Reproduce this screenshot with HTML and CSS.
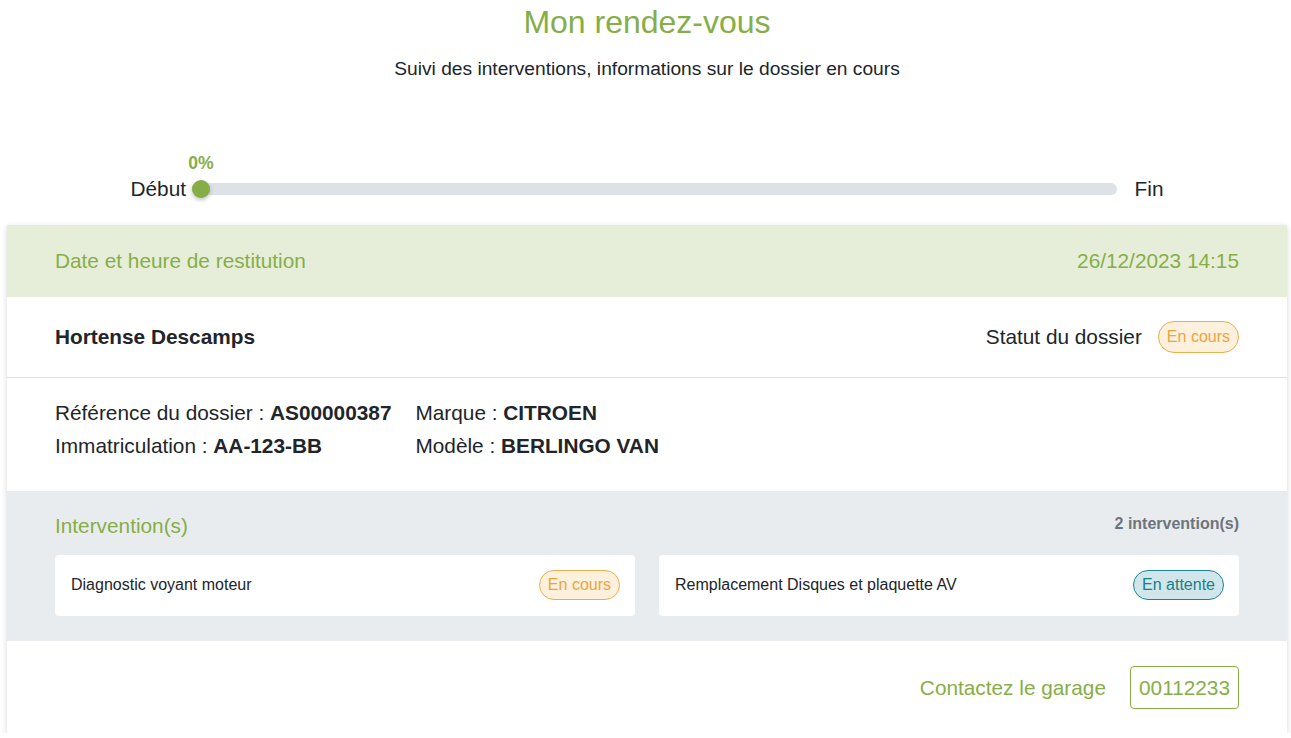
FILE: index.html
```html
<!DOCTYPE html>
<html lang="fr">
<head>
<meta charset="utf-8">
<title>Mon rendez-vous</title>
<link rel="stylesheet" href="styles.css">
</head>
<body>
<div class="page">
  <header class="intro">
    <h1 class="title">Mon rendez-vous</h1>
    <p class="subtitle">Suivi des interventions, informations sur le dossier en cours</p>
  </header>

  <div class="progress">
    <span class="progress-label">Début</span>
    <div class="track">
      <div class="dot"><span class="pct">0%</span></div>
    </div>
    <span class="progress-label end">Fin</span>
  </div>

  <section class="card">
    <div class="restitution">
      <span>Date et heure de restitution</span>
      <span>26/12/2023 14:15</span>
    </div>
    <div class="client">
      <span class="name">Hortense Descamps</span>
      <div class="status">
        <span>Statut du dossier</span>
        <span class="badge badge-warn">En cours</span>
      </div>
    </div>
    <div class="details">
      <div class="col">
        <div>Référence du dossier : <b>AS00000387</b></div>
        <div>Immatriculation : <b>AA-123-BB</b></div>
      </div>
      <div class="col">
        <div>Marque : <b>CITROEN</b></div>
        <div>Modèle : <b>BERLINGO VAN</b></div>
      </div>
    </div>
    <div class="interventions">
      <div class="int-head">
        <span class="int-title">Intervention(s)</span>
        <span class="int-count">2 intervention(s)</span>
      </div>
      <div class="int-grid">
        <div class="int-card">
          <span>Diagnostic voyant moteur</span>
          <span class="badge badge-warn">En cours</span>
        </div>
        <div class="int-card">
          <span>Remplacement Disques et plaquette AV</span>
          <span class="badge badge-info">En attente</span>
        </div>
      </div>
    </div>
    <div class="contact">
      <span class="contact-label">Contactez le garage</span>
      <span class="phone">00112233</span>
    </div>
  </section>
</div>
</body>
</html>
```

FILE: styles.css
```css
* { box-sizing: border-box; }
html, body { margin: 0; padding: 0; }
body {
  font-family: "Liberation Sans", Arial, sans-serif;
  color: #212529;
  background: #fff;
}
.page { padding: 0 4px 0 7px; }

.intro { text-align: center; }
.title {
  margin: 0;
  padding-top: 3px;
  font-size: 32px;
  font-weight: 400;
  line-height: 38px;
  color: #86ae47;
}
.subtitle {
  margin: 16px 0 0;
  font-size: 19.2px;
  line-height: 24px;
}

.progress {
  width: 1033px;
  margin: 96px auto 0;
  display: flex;
  align-items: center;
}
.progress-label { font-size: 20.8px; line-height: 24px; }
.progress-label.end { margin-left: 18px; }
.track {
  flex: 1;
  height: 12px;
  margin-left: 6px;
  border-radius: 6px;
  background: #dee2e6;
  position: relative;
}
.dot {
  position: absolute;
  left: 0;
  top: -3px;
  width: 18px;
  height: 18px;
  border-radius: 50%;
  background: #86ae47;
  box-shadow: 0 2px 4px rgba(0,0,0,0.25);
}
.pct {
  position: absolute;
  left: 50%;
  bottom: 25px;
  transform: translateX(-50%);
  font-size: 17.6px;
  font-weight: 700;
  color: #86ae47;
  line-height: 20px;
}

.card {
  margin-top: 24px;
  width: 1280px;
  background: #fff;
  box-shadow: 0 2px 6px rgba(0,0,0,0.16);
}
.restitution {
  display: flex;
  justify-content: space-between;
  align-items: center;
  padding: 20px 48px 20px;
  line-height: 32px;
  background: #e6eed9;
  color: #86ae47;
  font-size: 20.8px;
}
.client {
  display: flex;
  justify-content: space-between;
  align-items: center;
  padding: 24px 48px;
  border-bottom: 1px solid #dee2e6;
  font-size: 20.8px;
}
.name { font-weight: 700; }
.status { display: flex; align-items: center; gap: 16px; }

.badge {
  display: inline-block;
  font-size: 16px;
  line-height: 20px;
  padding: 4px 8px;
  border-radius: 16px;
  border: 1px solid;
}
.client .badge { padding: 5px 8px; }
.badge-warn { background: #fdf0dc; border-color: #eab04c; color: #eaa53f; }
.badge-info { background: #d0e6ea; border-color: #1a8593; color: #1a7f8c; }

.details {
  display: flex;
  gap: 24px;
  padding: 18px 48px 29px;
  font-size: 20.8px;
  line-height: 33px;
}

.interventions {
  background: #e9ecef;
  padding: 19px 48px 25px;
}
.int-head {
  display: flex;
  justify-content: space-between;
  align-items: flex-start;
  margin-bottom: 14px;
}
.int-title { font-size: 20.8px; line-height: 31px; color: #86ae47; }
.int-count { font-size: 16px; font-weight: 700; color: #6c757d; line-height: 28px; }
.int-grid {
  display: grid;
  grid-template-columns: 1fr 1fr;
  gap: 24px;
}
.int-card {
  display: flex;
  justify-content: space-between;
  align-items: center;
  background: #fff;
  border-radius: 4px;
  padding: 15px 15px 16px 16px;
  font-size: 16px;
}

.contact {
  display: flex;
  justify-content: flex-end;
  align-items: center;
  gap: 24px;
  padding: 25px 48px 24px;
  font-size: 20.8px;
  color: #86ae47;
}
.phone {
  border: 1px solid #86ae47;
  border-radius: 4px;
  padding: 8px 8px;
  line-height: 25px;
}
```
